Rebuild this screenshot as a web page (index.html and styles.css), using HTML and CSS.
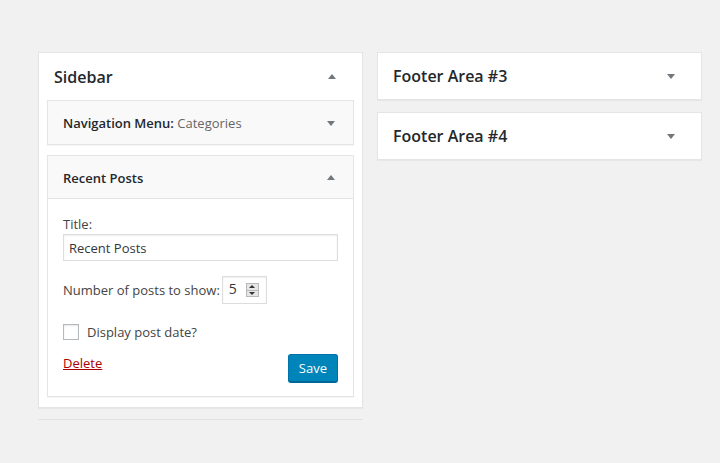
FILE: index.html
```html
<!DOCTYPE html>
<html>
<head>
<meta charset="utf-8">
<link rel="stylesheet" href="styles.css">
</head>
<body>
<div class="page">
  <div class="column">
    <div class="area area-open">
      <div class="area-head">
        <h2 class="area-title">Sidebar</h2>
        <span class="arrow arrow-up"></span>
      </div>
      <div class="widget">
        <div class="widget-head">
          <h3 class="widget-title">Navigation Menu: <span class="widget-sub">Categories</span></h3>
          <span class="arrow arrow-down"></span>
        </div>
      </div>
      <div class="widget widget-open">
        <div class="widget-head">
          <h3 class="widget-title">Recent Posts</h3>
          <span class="arrow arrow-up"></span>
        </div>
        <div class="widget-body">
          <label class="field-label">Title:</label>
          <input class="text-input" type="text" value="Recent Posts">
          <div class="number-row">
            <span class="number-label">Number of posts to show:</span>
            <div class="number-input">
              <span class="number-value">5</span>
              <span class="spinner">
                <span class="spin spin-up"></span>
                <span class="spin spin-down"></span>
              </span>
            </div>
          </div>
          <div class="check-row">
            <span class="checkbox"></span>
            <span class="check-label">Display post date?</span>
          </div>
          <div class="actions">
            <a class="delete-link" href="#">Delete</a>
            <button class="save-btn" type="button">Save</button>
          </div>
        </div>
      </div>
    </div>
    <div class="area-sep"></div>
  </div>
  <div class="column">
    <div class="area">
      <div class="area-head">
        <h2 class="area-title">Footer Area #3</h2>
        <span class="arrow arrow-down"></span>
      </div>
    </div>
    <div class="area">
      <div class="area-head">
        <h2 class="area-title">Footer Area #4</h2>
        <span class="arrow arrow-down"></span>
      </div>
    </div>
  </div>
</div>
</body>
</html>
```

FILE: styles.css
```css
* { box-sizing: border-box; }
html, body {
  margin: 0;
  background: #f1f1f1;
  font-family: "Open Sans", "Noto Sans", sans-serif;
  font-size: 13px;
  color: #444;
}
.page {
  display: flex;
  align-items: flex-start;
  gap: 14px;
  padding: 52px 0 0 38px;
}
.column {
  width: 325px;
  display: flex;
  flex-direction: column;
  gap: 12px;
}
.area {
  background: #fff;
  border: 1px solid #e5e5e5;
  box-shadow: 0 1px 1px rgba(0,0,0,.04);
}
.area-open {
  padding: 0 8px 10px;
}
.area-head {
  height: 46px;
  display: flex;
  align-items: center;
  justify-content: space-between;
  padding: 0 26px 0 15px;
}
.area-open .area-head {
  margin: 0 -8px;
  height: 47px;
}
.area-title {
  margin: 0;
  font-size: 16px;
  font-weight: 600;
  color: #23282d;
}
.arrow {
  width: 0;
  height: 0;
  border-left: 4px solid transparent;
  border-right: 4px solid transparent;
}
.arrow-up { border-bottom: 5px solid #72777c; }
.arrow-down { border-top: 5px solid #72777c; }
.widget {
  background: #f9f9f9;
  border: 1px solid #e5e5e5;
  box-shadow: 0 1px 1px rgba(0,0,0,.04);
}
.widget + .widget { margin-top: 10px; }
.widget-head {
  height: 43px;
  display: flex;
  align-items: center;
  justify-content: space-between;
  padding: 1px 18px 0 15px;
}
.widget-title {
  margin: 0;
  font-size: 13px;
  font-weight: 600;
  color: #23282d;
}
.widget-sub {
  font-weight: 400;
  color: #666;
}
.widget-open .widget-head { border-bottom: 1px solid #e5e5e5; }
.widget-body {
  background: #fff;
  padding: 16px 15px 14px;
}
.field-label {
  display: block;
  line-height: 19px;
  color: #444;
}
.text-input {
  display: block;
  width: 100%;
  height: 27px;
  margin-top: 0;
  border: 1px solid #ddd;
  box-shadow: inset 0 1px 2px rgba(0,0,0,.07);
  padding: 0 5px;
  font: inherit;
  color: #32373c;
  background: #fff;
}
.number-row {
  display: flex;
  align-items: center;
  gap: 2px;
  margin-top: 15px;
}
.number-input {
  width: 45px;
  height: 28px;
  border: 1px solid #ddd;
  box-shadow: inset 0 1px 2px rgba(0,0,0,.07);
  display: flex;
  align-items: center;
  justify-content: space-between;
  padding: 0 7px 0 6px;
  font-size: 14px;
  color: #32373c;
}
.number-value { line-height: 1; margin-top: -2px; }
.spinner {
  width: 13px;
  height: 14px;
  display: flex;
  flex-direction: column;
  border: 1px solid #b8b8b8;
  background: #e6e6e6;
}
.spin {
  flex: 1;
  display: flex;
  align-items: center;
  justify-content: center;
}
.spin-up { border-bottom: 1px solid #b8b8b8; }
.spin::before {
  content: "";
  width: 0;
  height: 0;
  border-left: 3px solid transparent;
  border-right: 3px solid transparent;
}
.spin-up::before { border-bottom: 3px solid #333; }
.spin-down::before { border-top: 3px solid #333; }
.check-row {
  display: flex;
  align-items: center;
  gap: 8px;
  margin-top: 19px;
}
.checkbox {
  width: 16px;
  height: 16px;
  border: 1px solid #b4b9be;
  background: #fff;
  box-shadow: inset 0 1px 2px rgba(0,0,0,.1);
}
.actions {
  display: flex;
  justify-content: space-between;
  align-items: flex-start;
  margin-top: 13px;
}
.delete-link {
  color: #a00;
  text-decoration: underline;
  line-height: 18px;
  margin-top: 0;
}
.save-btn {
  height: 28px;
  padding: 0 10px;
  border: 1px solid #0073aa;
  border-bottom-color: #006799;
  border-radius: 3px;
  background: #0085ba;
  box-shadow: 0 1px 0 #006799;
  color: #fff;
  font: inherit;
  margin-top: 0;
}
.area-sep {
  border-top: 1px solid #e2e2e2;
  margin-top: -1px;
}
```
